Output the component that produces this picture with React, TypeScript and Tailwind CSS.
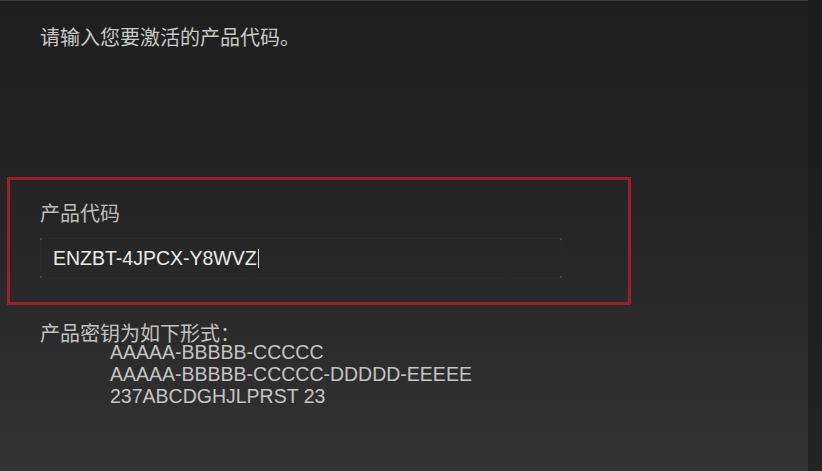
const cjk = "font-['Noto_Sans_CJK_SC','Noto_Sans',sans-serif]";
const latin = "font-['Liberation_Sans',Arial,sans-serif]";

const keyFormats = [
  "AAAAA-BBBBB-CCCCC",
  "AAAAA-BBBBB-CCCCC-DDDDD-EEEEE",
  "237ABCDGHJLPRST 23",
];

export default function App() {
  return (
    <div className="w-[822px] h-[471px] flex overflow-hidden bg-[#1c1c1c]">
      {/* Main panel */}
      <div className="flex-1 flex flex-col px-[7px] pt-[24px] bg-linear-to-b from-[#1e1e1e] via-[#262626] to-[#333333] border-t border-[#3a3a3a]">
        <p className={`${cjk} pl-[33px] text-[20px] leading-[24px] text-[#c9c9c9]`}>
          请输入您要激活的产品代码。
        </p>

        {/* Product code box */}
        <div className="mt-[128px] w-[624px] border-[3px] border-[#9b1f27] pl-[30px] pt-[21px] pb-[24px]">
          <p className={`${cjk} text-[20px] leading-[24px] text-[#bdbdbd]`}>产品代码</p>
          <div className="relative mt-[13px] w-[522px] h-[40px] flex items-center pl-[12px] border border-white/[0.02] rounded-[2px]">
            <span className="absolute -left-px -top-px w-[2px] h-[2px] bg-[#4a4a4a]" />
            <span className="absolute -left-px -bottom-px w-[2px] h-[2px] bg-[#4a4a4a]" />
            <span className="absolute -right-px -top-px w-[2px] h-[2px] bg-[#4a4a4a]" />
            <span className="absolute -right-px -bottom-px w-[2px] h-[2px] bg-[#4a4a4a]" />
            <span className={`${latin} text-[19.5px] leading-[22px] text-[#ebebeb]`}>ENZBT-4JPCX-Y8WVZ</span>
            <span className="ml-px w-px h-[19px] bg-[#e0e0e0]" />
          </div>
        </div>

        <p className={`${cjk} mt-[20px] pl-[33px] text-[20px] leading-[16px] text-[#c2c2c2]`}>
          产品密钥为如下形式：
        </p>
        <div className={`${latin} pl-[103px] text-[19.5px] leading-[22px] text-[#c4c4c4]`}>
          {keyFormats.map((k) => (
            <p key={k}>{k}</p>
          ))}
        </div>
      </div>

      {/* Right edge strip */}
      <div className="w-[14px] bg-linear-to-b from-[#1b1b1b] to-[#222222]" />
    </div>
  );
}
